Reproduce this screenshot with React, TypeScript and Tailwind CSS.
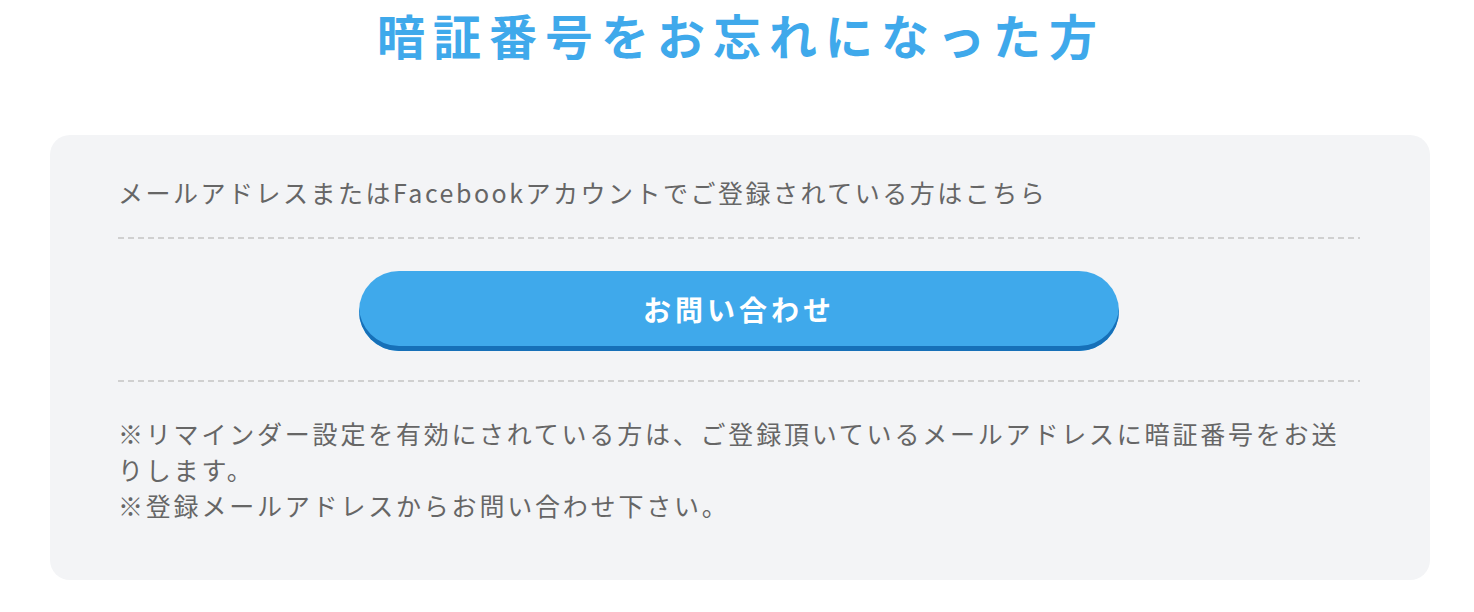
import React from "react";

export default function App() {
  const jp = { fontFamily: '"Noto Sans CJK JP", "Noto Sans", sans-serif' };
  return (
    <div className="min-h-[612px] w-full bg-white" style={jp}>
      <h1 className="pl-[8px] text-center text-[48px] font-bold leading-[68px] tracking-[8px] text-[#3fa9eb]">
        暗証番号をお忘れになった方
      </h1>
      <div className="ml-[50px] mr-[44px] mt-[67px] rounded-[20px] bg-[#f3f4f6] pl-[68px] pr-[70px] pb-[57px] pt-[39px]">
        <p className="text-[25px] leading-[36px] tracking-[2.5px] text-[#666]">
          メールアドレスまたはFacebookアカウントでご登録されている方はこちら
        </p>
        <div className="mt-[27px] h-[2px] bg-[repeating-linear-gradient(to_right,#d0d0d0_0,#d0d0d0_6px,transparent_6px,transparent_10px)]" />
        <div className="mt-[32px] flex justify-center">
          <button className="h-[80px] w-[760px] rounded-full bg-[#3fa9eb] pb-[5px] text-[28px] font-bold tracking-[4px] text-white shadow-[inset_0_-5px_0_#1670b8]">
            お問い合わせ
          </button>
        </div>
        <div className="mt-[29px] h-[2px] bg-[repeating-linear-gradient(to_right,#d0d0d0_0,#d0d0d0_6px,transparent_6px,transparent_10px)]" />
        <div className="mt-[33px] text-[25px] leading-[36px] tracking-[2.8px] text-[#666]">
          <p>※リマインダー設定を有効にされている方は、ご登録頂いているメールアドレスに暗証番号をお送りします。</p>
          <p>※登録メールアドレスからお問い合わせ下さい。</p>
        </div>
      </div>
    </div>
  );
}
